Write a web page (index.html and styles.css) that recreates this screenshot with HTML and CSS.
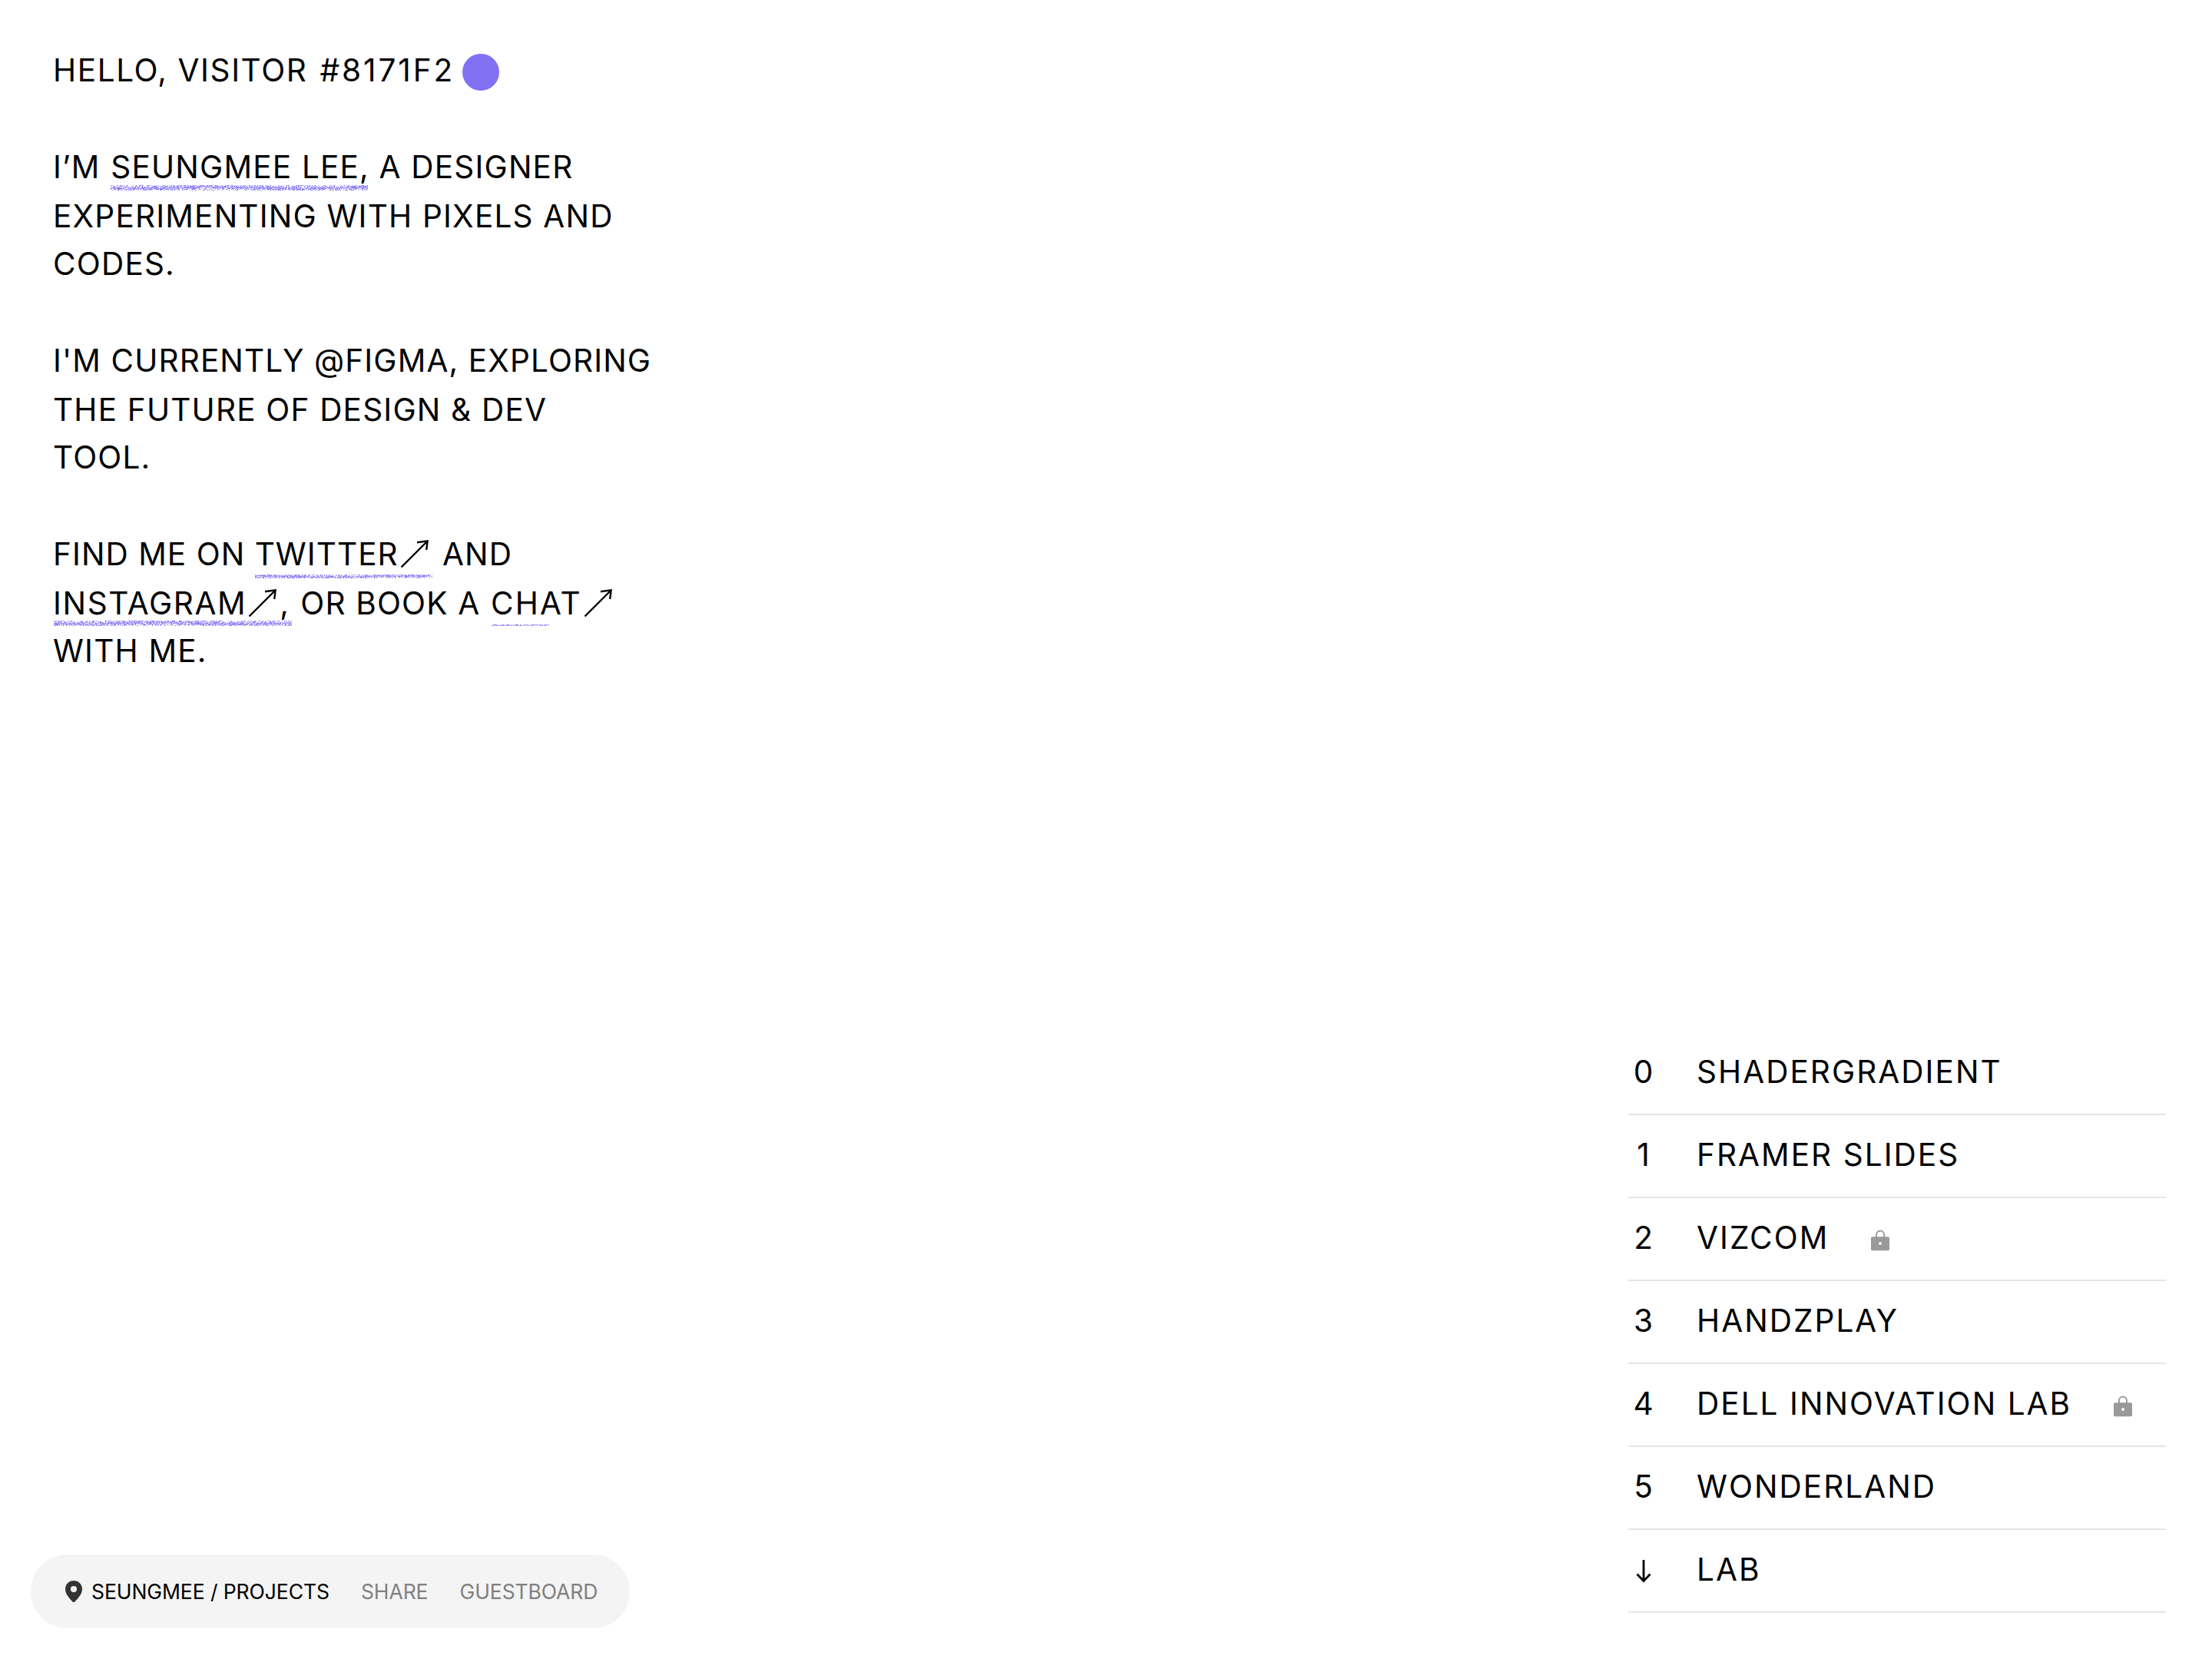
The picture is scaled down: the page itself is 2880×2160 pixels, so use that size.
FILE: index.html
```html
<!-- index.html -->

<html lang="en">
  <head>
    <meta charset="utf-8">
    <title>Seungmee Lee</title>
    <link rel="stylesheet" href="styles.css">
  </head>
  <body>
    <!-- Shared icons -->
    <svg class="sprite">
      <symbol id="arrow" viewBox="0 0 37 37">
        <path d="M1.5 35.5 35 2M22 3.2 35.6 1.4 34.2 13" fill="none" stroke="#000" stroke-width="2.4"/>
      </symbol>
      <symbol id="lock" viewBox="0 0 24 28">
        <path d="M7 11V6.5a5 5 0 0 1 10 0V11" fill="none" stroke="#999" stroke-width="1.9"/>
        <rect y="9.2" width="24" height="18" rx="1.8" fill="#999"/>
        <circle cx="12" cy="18" r="1.9" fill="#fff"/>
      </symbol>
    </svg>

    <main class="left">
      <section class="intro">
        <p><span class="line hello">HELLO, VISITOR <span class="code">#8171F2</span><i class="dot"></i></span></p>
        <p>
          <span class="line">I’M <a class="scribble about" href="#">SEUNGMEE LEE,<canvas width="335" height="7" data-thick="7"></canvas></a> A DESIGNER</span>
          <span class="line second">EXPERIMENTING WITH PIXELS AND</span>
          <span class="line">CODES.</span>
        </p>
        <p>
          <span class="line figma">I'M CURRENTLY @FIGMA, EXPLORING</span>
          <span class="line second">THE FUTURE OF DESIGN &amp; DEV</span>
          <span class="line">TOOL.</span>
        </p>
        <p>
          <span class="line find">FIND ME ON <a class="scribble twitter" href="#">TWITTER<svg class="arrow"><use href="#arrow"/></svg><canvas width="231" height="5" data-thick="5"></canvas></a> AND</span>
          <span class="line second"><a class="scribble insta" href="#">INSTAGRAM<svg class="arrow"><use href="#arrow"/></svg>,<canvas width="310" height="7" data-thick="7"></canvas></a> OR BOOK A <a class="scribble chat" href="#">CHAT<svg class="arrow"><use href="#arrow"/></svg><canvas width="76" height="2" data-thick="2"></canvas></a></span>
          <span class="line">WITH ME.</span>
        </p>
      </section>

      <nav class="pill">
        <a class="here" href="#">
          <svg class="pin" viewBox="0 0 22 28">
            <path fill="#333" fill-rule="evenodd" d="M11 0C4.8 0 0 4.8 0 11c0 6.500 5.500 12 9.600 16.400q1.400 1.300 2.800 0C16.500 23 22 17.500 22 11 22 4.800 17.200 0 11 0zm0 7a4.100 4.100 0 1 1 0 8.200A4.100 4.100 0 0 1 11 7z"/>
          </svg>
          SEUNGMEE / PROJECTS
        </a>
        <a href="#">SHARE</a>
        <a href="#">GUESTBOARD</a>
      </nav>
    </main>

    <ul class="projects">
      <li><span class="num">0</span>SHADERGRADIENT</li>
      <li><span class="num">1</span>FRAMER SLIDES</li>
      <li><span class="num">2</span>VIZCOM<svg class="lock"><use href="#lock"/></svg></li>
      <li><span class="num">3</span>HANDZPLAY</li>
      <li><span class="num">4</span>DELL INNOVATION LAB<svg class="lock"><use href="#lock"/></svg></li>
      <li><span class="num">5</span>WONDERLAND</li>
      <li>
        <span class="num">
          <svg class="down" viewBox="0 0 20 30"><path d="M10 0v27M1.500 18.500 10 27.500l8.500-9" fill="none" stroke="#000" stroke-width="2.800"/></svg>
        </span>LAB
      </li>
    </ul>

    <script>
      // Grainy underline: scattered pixels around a slowly drifting line
      let seed = 7;
      const rand = () => (seed = (seed * 16807) % 2147483647) / 2147483647;

      document.querySelectorAll('.scribble canvas').forEach(canvas => {
        const ctx = canvas.getContext('2d');
        const thick = Number(canvas.dataset.thick);
        for (let x = 0; x < canvas.width; x++) {
          const mid = (thick - 1) / 2 + Math.sin(x / 34 + thick) * thick / 6;
          for (let y = 0; y < thick; y++) {
            const density = 0.92 - Math.abs(y - mid) / thick;
            if (rand() < density) {
              ctx.fillStyle = `rgba(122, 105, 242, ${0.4 + rand() * 0.6})`;
              ctx.fillRect(x, y, 1, 1);
            }
          }
        }
      });
    </script>
  </body>
</html>
```
FILE: styles.css
```css
* {
  box-sizing: border-box;
}
body {
  margin: 0;
  height: 100vh;
  display: flex;
  justify-content: space-between;
  background-color: #ffffff;
  color: #000000;
  font-family: Inter, "Liberation Sans", sans-serif;
  font-size: 40.5px;
  line-height: 63px;
}
a {
  color: inherit;
  text-decoration: none;
}
.sprite {
  position: absolute;
  width: 0;
  height: 0;
}
.left {
  display: flex;
  flex-direction: column;
  justify-content: space-between;
  align-items: flex-start;
  padding: 60px 0 40px 40px;
}
.intro {
  padding-left: 29px;
  letter-spacing: 1.2px;
  white-space: nowrap;
}
.intro p {
  margin: 0 0 63px;
}
.line {
  display: block;
  height: 63px;
}
.second {
  padding-top: 1px;
}
.hello {
  display: flex;
  align-items: center;
  letter-spacing: 1.6px;
}
.code {
  margin-left: 16px;
  letter-spacing: 2.95px;
}
.dot {
  width: 48px;
  height: 48px;
  margin: 5px 0 0 10px;
  border-radius: 50%;
  background-color: #8171f2;
}
.figma {
  letter-spacing: 1.13px;
}
.find {
  letter-spacing: 1.05px;
}
.scribble {
  position: relative;
}
.scribble canvas {
  position: absolute;
  left: 0;
  top: 48px;
}
.about {
  margin-left: 1px;
}
.twitter {
  margin-right: 2px;
}
.twitter canvas {
  top: 51px;
}
.insta {
  margin-right: 1px;
  letter-spacing: 1.65px;
}
.insta canvas {
  left: 1px;
  top: 47px;
}
.chat {
  margin-left: 1px;
  letter-spacing: 2.1px;
}
.chat canvas {
  top: 52px;
}
.arrow {
  width: 37px;
  height: 37px;
  margin: 0 4px 0 2px;
  vertical-align: -4px;
}
.pill {
  display: flex;
  align-items: center;
  gap: 41px;
  height: 96px;
  padding: 0 42px 0 45px;
  border-radius: 48px;
  background-color: #f4f4f4;
  color: #808080;
  font-size: 26.5px;
  letter-spacing: -0.08px;
}
.here {
  display: flex;
  align-items: center;
  gap: 12px;
  color: #000000;
}
.pin {
  width: 22px;
  height: 28px;
}
.projects {
  align-self: flex-end;
  width: 700px;
  margin: 0 60px 60px 0;
  padding: 0;
  list-style: none;
  letter-spacing: 2.05px;
}
.projects li {
  display: flex;
  height: 108px;
  padding: 20px 0 23px;
  border-bottom: 2px solid #e5e5e5;
}
.num {
  display: flex;
  justify-content: center;
  width: 39px;
  margin-right: 50px;
  letter-spacing: 0;
}
.lock {
  width: 24px;
  height: 28px;
  margin: 21px 0 0 55px;
}
.down {
  width: 20px;
  height: 30px;
  margin-top: 19px;
}
```
